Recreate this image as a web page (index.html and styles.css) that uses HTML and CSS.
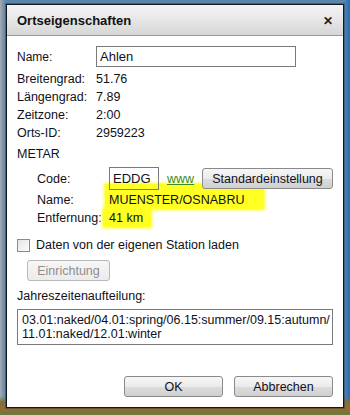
FILE: index.html
```html
<!DOCTYPE html>
<html lang="de">
<head>
  <meta charset="UTF-8">
  <title>Ortseigenschaften</title>
  <link rel="stylesheet" href="styles.css">
</head>
<body>

  <div class="dialog">
    <div class="titlebar">
      <span class="title">Ortseigenschaften</span>
      <span class="close">&#x2715;</span>
    </div>

    <div class="content">
      <div class="name-row">
        <label class="lbl">Name:</label>
        <input type="text" class="name-input" value="Ahlen">
      </div>

      <div class="info">
        <span>Breitengrad:</span><span>51.76</span>
        <span>Längengrad:</span><span>7.89</span>
        <span>Zeitzone:</span><span>2:00</span>
        <span>Orts-ID:</span><span>2959223</span>
      </div>

      <div class="section">METAR</div>

      <div class="metar">
        <div class="metar-row code-row">
          <span class="mlbl">Code:</span>
          <input type="text" class="code-input" value="EDDG">
          <a class="www">www</a>
          <button class="btn btn-std">Standardeinstellung</button>
        </div>
        <div class="metar-row">
          <span class="mlbl">Name:</span>
          <span class="mark mark-name">MUENSTER/OSNABRU</span>
        </div>
        <div class="metar-row">
          <span class="mlbl">Entfernung:</span>
          <span class="mark mark-dist">41 km</span>
        </div>
      </div>

      <div class="check-row">
        <span class="checkbox"></span>
        <span>Daten von der eigenen Station laden</span>
      </div>

      <button class="btn btn-disabled">Einrichtung</button>

      <div class="section seasons-lbl">Jahreszeitenaufteilung:</div>
      <div class="seasons">03.01:naked/04.01:spring/06.15:summer/09.15:autumn/<br>11.01:naked/12.01:winter</div>

      <div class="footer">
        <button class="btn btn-foot">OK</button>
        <button class="btn btn-foot">Abbrechen</button>
      </div>
    </div>
  </div>

</body>
</html>
```

FILE: styles.css
```css
html, body {
  height: 100%;
}

body {
  margin: 0;
  font-family: 'Liberation Sans', Arial, sans-serif;
  font-size: 12px;
  color: #10101a;
  background:
    linear-gradient(180deg, rgba(0,0,0,0) 0, rgba(0,0,0,0) 396px, #7a7040 402px, #9a6a30 408px, #6a7a40 415px),
    linear-gradient(90deg, #a8acb0 0, #7c94aa 3px, #5a86ac 6px, #5a86ac 344px, #3a78b8 347px, #2a6ab0 350px),
    linear-gradient(180deg, #c0c0c0 0, #9aa4b0 120px, #4f88b8 260px, #6a9ab8 415px);
  overflow: hidden;
}

.dialog {
  margin: 4px 0 0 6px;
  width: 338px;
  height: 404px;
  box-sizing: border-box;
  border: 1px solid #11181e;
  box-shadow: 0 0 0 1px rgba(20, 30, 40, 0.35);
  background-color: #fff;
  display: flex;
  flex-direction: column;
}

.titlebar {
  height: 30px;
  flex: none;
  background: linear-gradient(180deg, #f4f4f4 0, #e6e6e6 50%, #d6d6d6 100%);
  border-bottom: 1px solid #9a9a9a;
  display: flex;
  align-items: center;
  justify-content: space-between;
  padding: 0 10px 0 10px;
}

.title {
  font-weight: bold;
  font-size: 13px;
  color: #111;
}

.close {
  font-weight: bold;
  font-size: 12px;
  color: #222;
  margin-top: 1px;
}

.content {
  flex: 1;
  padding: 10px 10px 10px 10px;
  display: flex;
  flex-direction: column;
}

.name-row {
  display: flex;
  align-items: center;
  height: 21px;
}

.lbl {
  width: 79px;
}

.name-input {
  width: 200px;
  height: 21px;
  box-sizing: border-box;
  border: 1px solid #7a7a7a;
  font: inherit;
  font-size: 13px;
  padding: 0 3px;
  margin: 0;
  color: #10101a;
}

.info {
  display: grid;
  grid-template-columns: 79px auto;
  grid-auto-rows: 18px;
  align-items: center;
  margin-top: 3px;
  font-size: 12.5px;
}

.section {
  margin-top: 3px;
  height: 18px;
  line-height: 18px;
  font-size: 12.5px;
}

.metar {
  padding-left: 20px;
  margin-top: 4px;
  font-size: 12.5px;
}

.metar-row {
  display: flex;
  align-items: center;
  height: 18px;
}

.code-row {
  height: 23px;
  margin-bottom: 1px;
  position: relative;
  z-index: 1;
}

.mlbl {
  width: 72px;
}

.code-input {
  width: 50px;
  height: 23px;
  box-sizing: border-box;
  border: 1px solid #7a7a7a;
  font: inherit;
  font-size: 13px;
  padding: 0 3px;
  margin: 0;
  color: #10101a;
  background: transparent;
}

.www {
  color: #3a8a1c;
  text-decoration: underline;
  margin-left: 8px;
  width: 35px;
}

.btn {
  font: inherit;
  font-size: 12.5px;
  color: #10101a;
  border: 1px solid #8a8a8a;
  border-radius: 3px;
  background: linear-gradient(180deg, #f6f6f6 0, #ebebeb 50%, #dcdcdc 52%, #d0d0d0 100%);
  padding: 0;
  margin: 0;
  height: 21px;
  cursor: pointer;
}

.btn-std {
  width: 131px;
}

.mark {
  background-color: #ffff24;
  box-shadow: 0 0 3px 1px #ffff24;
  line-height: 16px;
}

.mark-name {
  margin-left: -4px;
  margin-top: -8px;
  padding: 8px 20px 1px 4px;
}

.mark-dist {
  margin-left: -6px;
  padding: 1px 8px 1px 6px;
}

.check-row {
  display: flex;
  align-items: center;
  margin-top: 10px;
  height: 16px;
  font-size: 12.5px;
}

.checkbox {
  width: 11px;
  height: 11px;
  border: 1px solid #8a8a8a;
  background: linear-gradient(135deg, #e4e4e4, #fdfdfd);
  margin-right: 6px;
}

.btn-disabled {
  width: 83px;
  margin: 7px 0 0 10px;
  color: #8e8e8e;
  border-color: #b8b8b8;
  background: linear-gradient(180deg, #f6f6f6, #ececec);
}

.seasons-lbl {
  margin-top: 6px;
}

.seasons {
  margin-top: 4px;
  border: 1px solid #7a7a7a;
  padding: 3px 4px;
  line-height: 14px;
  width: 316px;
  box-sizing: border-box;
  font-size: 12.5px;
}

.footer {
  margin-top: auto;
  display: flex;
  justify-content: flex-end;
  gap: 11px;
  padding-bottom: 0;
}

.btn-foot {
  width: 99px;
  height: 21px;
}
```
